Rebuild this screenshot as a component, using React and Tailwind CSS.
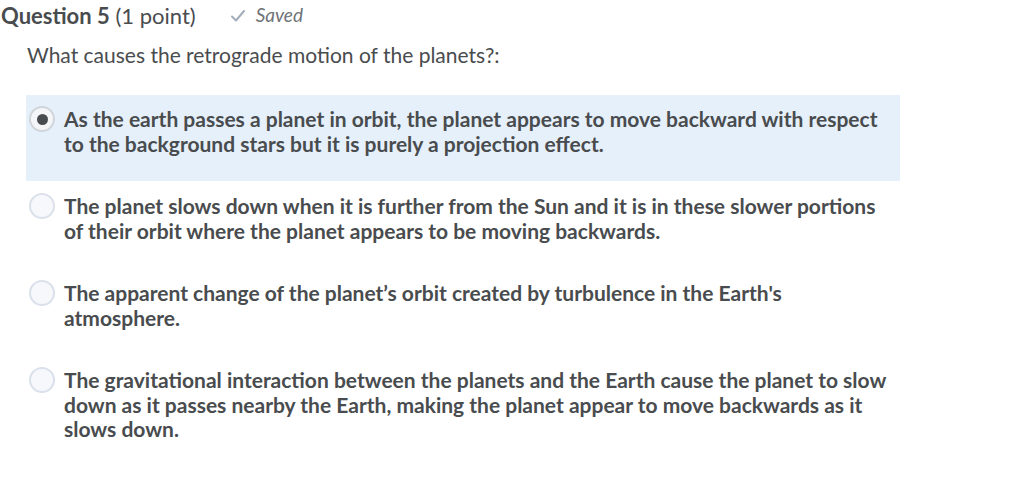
import React from 'react';

const options = [
  'As the earth passes a planet in orbit, the planet appears to move backward with respect to the background stars but it is purely a projection effect.',
  'The planet slows down when it is further from the Sun and it is in these slower portions of their orbit where the planet appears to be moving backwards.',
  "The apparent change of the planet\u2019s orbit created by turbulence in the Earth's atmosphere.",
  'The gravitational interaction between the planets and the Earth cause the planet to slow down as it passes nearby the Earth, making the planet appear to move backwards as it slows down.',
];

const Radio = ({ checked }) => (
  <span
    className={`-mt-[2px] flex h-[26px] w-[26px] shrink-0 items-center justify-center rounded-full border-2 ${
      checked ? 'border-[#d0d5da] bg-[#f4f5f7]' : 'border-[#dbe1ea] bg-[#f6f8fb]'
    }`}
  >
    {checked && <span className="h-[11px] w-[11px] rounded-full bg-[#494c4e]" />}
  </span>
);

export default function App() {
  const selected = 0;
  return (
    <div className="bg-white w-[1024px] h-[493px] overflow-hidden text-[#494c4e]" style={{ fontFamily: 'Lato, "Open Sans", sans-serif' }}>
      <div className="flex items-center h-[31px] pl-[1px]">
        <h2 className="text-[22px] leading-[26px]">
          <span className="font-bold">Question 5</span> (1 point)
        </h2>
        <span className="ml-[34px] flex items-center text-[#6e7376]">
          <svg width="16" height="16" viewBox="0 0 16 16" className="mr-[10px]">
            <path d="M2 8.5 L6 12.5 L14 3" fill="none" stroke="#a3adba" strokeWidth="2" strokeLinecap="round" strokeLinejoin="round" />
          </svg>
          <span className="italic text-[19px]">Saved</span>
        </span>
      </div>
      <p className="ml-[27px] mt-[12px] text-[21px] leading-[24px]">What causes the retrograde motion of the planets?:</p>
      <div className="mt-[28px] flex flex-col gap-px">
        {options.map((text, i) => (
          <label
            key={i}
            className={`ml-[26px] w-[874px] flex gap-[9px] pl-[3px] pr-[8px] pt-[13px] pb-[25px] ${i === selected ? 'bg-[#e6f0fb]' : ''}`}
          >
            <Radio checked={i === selected} />
            <span className="font-bold text-[21px] leading-[24.5px] -mt-px">{text}</span>
          </label>
        ))}
      </div>
    </div>
  );
}
